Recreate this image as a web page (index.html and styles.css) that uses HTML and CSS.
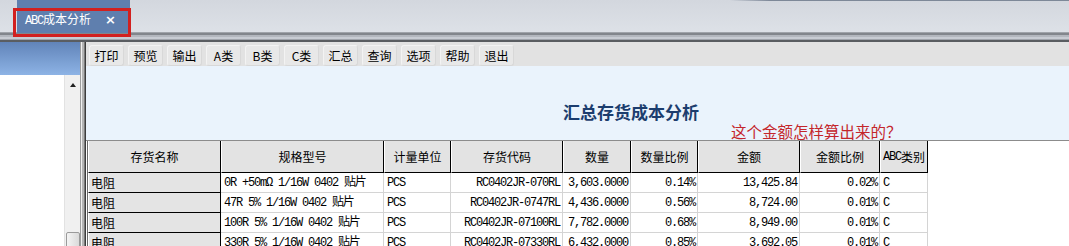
FILE: index.html
```html
<!DOCTYPE html>
<html>
<head>
    <meta charset="utf-8">
    <link rel="stylesheet" href="styles.css">
</head>
<body>

<div class="tabbar">
    <div class="tab">
        <span class="tab-title"><span class="latin">ABC</span>成本分析</span>
        <span class="tab-close">×</span>
    </div>
    <div class="tab-mark"></div>
</div>
<div class="tabbar-rule"></div>

<div class="main">
    <div class="side">
        <div class="side-head"></div>
        <div class="side-body">
            <div class="side-list"></div>
            <div class="scrollbar">
                <span class="arrow-up"></span>
                <span class="thumb"></span>
            </div>
        </div>
    </div>
    <div class="splitter"></div>

    <div class="content">
        <div class="toolbar">
            <button class="tool">打印</button>
            <button class="tool">预览</button>
            <button class="tool">输出</button>
            <button class="tool">A类</button>
            <button class="tool">B类</button>
            <button class="tool">C类</button>
            <button class="tool">汇总</button>
            <button class="tool">查询</button>
            <button class="tool">选项</button>
            <button class="tool">帮助</button>
            <button class="tool">退出</button>
        </div>

        <div class="report-head">
            <h1 class="report-title">汇总存货成本分析</h1>
            <p class="note">这个金额怎样算出来的？</p>
        </div>

        <div class="grid-wrap">
            <div class="grid">
                <div class="hd first">存货名称</div>
                <div class="hd">规格型号</div>
                <div class="hd">计量单位</div>
                <div class="hd">存货代码</div>
                <div class="hd">数量</div>
                <div class="hd">数量比例</div>
                <div class="hd">金额</div>
                <div class="hd">金额比例</div>
                <div class="hd"><span class="latin">ABC</span>类别</div>

                <div class="cell name">电阻</div>
                <div class="cell num left">0R +50mΩ 1/16W 0402 贴片</div>
                <div class="cell num left">PCS</div>
                <div class="cell num right">RC0402JR-070RL</div>
                <div class="cell num right">3,603.0000</div>
                <div class="cell num right">0.14%</div>
                <div class="cell num right">13,425.84</div>
                <div class="cell num right">0.02%</div>
                <div class="cell num left">C</div>

                <div class="cell name">电阻</div>
                <div class="cell num left">47R 5% 1/16W 0402 贴片</div>
                <div class="cell num left">PCS</div>
                <div class="cell num right">RC0402JR-0747RL</div>
                <div class="cell num right">4,436.0000</div>
                <div class="cell num right">0.56%</div>
                <div class="cell num right">8,724.00</div>
                <div class="cell num right">0.01%</div>
                <div class="cell num left">C</div>

                <div class="cell name">电阻</div>
                <div class="cell num left">100R 5% 1/16W 0402 贴片</div>
                <div class="cell num left">PCS</div>
                <div class="cell num right">RC0402JR-07100RL</div>
                <div class="cell num right">7,782.0000</div>
                <div class="cell num right">0.68%</div>
                <div class="cell num right">8,949.00</div>
                <div class="cell num right">0.01%</div>
                <div class="cell num left">C</div>

                <div class="cell name">电阻</div>
                <div class="cell num left">330R 5% 1/16W 0402 贴片</div>
                <div class="cell num left">PCS</div>
                <div class="cell num right">RC0402JR-07330RL</div>
                <div class="cell num right">6,432.0000</div>
                <div class="cell num right">0.85%</div>
                <div class="cell num right">3,692.05</div>
                <div class="cell num right">0.01%</div>
                <div class="cell num left">C</div>
            </div>
        </div>
    </div>
</div>

</body>
</html>
```

FILE: styles.css
```css
body, html {
    margin: 0;
    height: 100%;
    overflow: hidden;
    font-family: "Noto Sans CJK SC", sans-serif;
    font-size: 12px;
    background-color: #ffffff;
}

.latin {
    font-family: "Liberation Mono", monospace;
    letter-spacing: -1.2px;
}

/* tab strip */
.tabbar {
    position: relative;
    height: 32px;
    display: flex;
    background:
        linear-gradient(to right, rgba(125, 136, 152, 0) 730px, #7d8898 770px) top / 100% 1px no-repeat,
        linear-gradient(#d3d7de, #dde1e7);
}

.tab {
    margin-left: 17px;
    width: 113px;
    height: 33px;
    box-sizing: border-box;
    padding: 7px 0 0 8px;
    display: flex;
    align-items: center;
    background-color: #5f7fae;
    color: #ffffff;
}

.tab-title {
    font-size: 12px;
    line-height: 14px;
    font-weight: normal;
}

.tab-close {
    margin-left: 14px;
    font-family: "DejaVu Sans", sans-serif;
    font-weight: bold;
    font-size: 13px;
    line-height: 14px;
}

.tab-mark {
    position: absolute;
    left: 13px;
    top: 8px;
    width: 118px;
    height: 29px;
    box-sizing: border-box;
    border: 3px solid #d2201f;
}

.tabbar-rule {
    height: 10px;
    background: linear-gradient(to bottom,
        #a0a4aa 0, #a0a4aa 1px,
        #82868c 1px, #82868c 3px,
        #b3b7be 3px, #b3b7be 5px,
        #c8ccd3 5px, #c8ccd3 7px,
        #a0a4ab 7px, #a0a4ab 8px,
        #5a5d61 8px, #5a5d61 10px);
}

/* body */
.main {
    display: flex;
    height: 204px;
}

.side {
    width: 81px;
    display: flex;
    flex-direction: column;
    border-right: 1px solid #9c9c9c;
    box-sizing: border-box;
}

.side-head {
    height: 33px;
    background: linear-gradient(#6184b9, #8db3e5);
}

.side-body {
    flex: 1;
    display: flex;
    background-color: #ffffff;
}

.side-list {
    flex: 1;
}

.scrollbar {
    width: 15px;
    display: flex;
    flex-direction: column;
    align-items: center;
    justify-content: space-between;
    background-color: #f0f0f0;
    border-left: 1px solid #e2e2e2;
}

.arrow-up {
    margin-top: 8px;
    width: 0;
    height: 0;
    border-left: 3.5px solid transparent;
    border-right: 3.5px solid transparent;
    border-bottom: 4px solid #202020;
}

.thumb {
    width: 14px;
    height: 16px;
    margin-bottom: -2px;
    box-sizing: border-box;
    border: 1px solid #9a9a9a;
    border-radius: 2px;
    background: linear-gradient(to right, #f4f4f4, #dadada);
}

.splitter {
    width: 5px;
    background: linear-gradient(to right,
        #f0f0f0 0, #f0f0f0 1px,
        #b4b4b4 1px, #b4b4b4 3px,
        #7a7a7a 3px, #7a7a7a 4px,
        #3c3c3c 4px, #3c3c3c 5px);
}

.content {
    flex: 1;
    display: flex;
    flex-direction: column;
    min-width: 0;
}

/* toolbar */
.toolbar {
    height: 26px;
    box-sizing: border-box;
    padding: 3px 0 0 3px;
    display: flex;
    align-items: flex-start;
    gap: 4px;
    background-color: #e2e2e2;
}

.tool {
    width: 35px;
    height: 21px;
    padding: 0;
    margin: 0;
    font-family: "Noto Sans CJK SC", sans-serif;
    font-size: 12px;
    line-height: 19px;
    color: #000000;
    background-color: #e8e8e8;
    border: 1px solid;
    border-color: #f3f3f3 #d8d8d8 #d8d8d8 #f3f3f3;
    border-radius: 3px;
}

/* report header */
.report-head {
    height: 76px;
    box-sizing: border-box;
    padding-top: 36px;
    background-color: #eaf3fc;
}

.report-title {
    margin: 0 0 0 477px;
    font-size: 17px;
    line-height: 20px;
    font-weight: bold;
    color: #1c3d6e;
}

.note {
    margin: 0 0 0 645px;
    font-size: 15.5px;
    line-height: 18px;
    color: #c4262b;
}

/* grid */
.grid-wrap {
    flex: 1;
    border-top: 1px solid #8c8c8c;
    background-color: #ffffff;
    padding-left: 1px;
}

.grid {
    display: grid;
    grid-template-columns: 133px 163px 67px 112px 68px 67px 102px 80px 48px;
    grid-auto-rows: 20px;
    grid-template-rows: 32px;
    width: 841px;
    border-left: 1px solid #6a6a6a;
}

.hd {
    box-sizing: border-box;
    display: flex;
    align-items: center;
    justify-content: center;
    background-color: #e3e3e3;
    border-left: 1px solid #ffffff;
    border-right: 1px solid #000000;
    border-bottom: 1px solid #000000;
    font-size: 12px;
    color: #000000;
    white-space: nowrap;
}

.cell {
    box-sizing: border-box;
    padding-top: 1px;
    line-height: 18px;
    white-space: nowrap;
    overflow: hidden;
    color: #000000;
    background-color: #ffffff;
    border-right: 1px solid #d4d4d4;
    border-bottom: 1px solid #d4d4d4;
}

.name {
    padding-left: 2px;
    font-size: 12px;
    background-color: #e4e4e4;
    border-left: 1px solid #ffffff;
    border-right: 1px solid #000000;
    border-bottom: 1px solid #000000;
}

.num {
    font-family: "Liberation Mono", "Noto Sans CJK SC", monospace;
    font-size: 12px;
    letter-spacing: -1.2px;
}

.left {
    padding-left: 3px;
}

.right {
    text-align: right;
    padding-right: 2px;
}
```
